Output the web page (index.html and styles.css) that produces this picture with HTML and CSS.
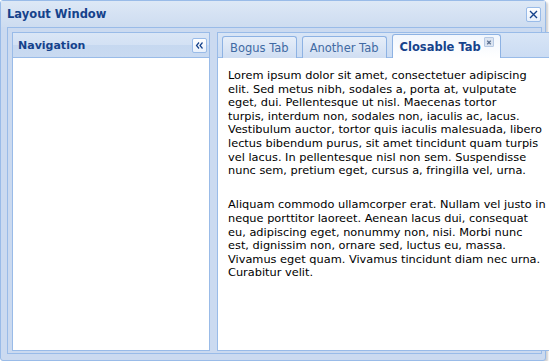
FILE: index.html
```html
<!DOCTYPE html>
<html>
<head>
<meta charset="utf-8">
<link rel="stylesheet" href="styles.css">
</head>
<body>
<div class="win">
  <div class="win-head">
    <span class="win-title">Layout Window</span>
    <span class="tool tool-close">
      <svg width="13" height="13" viewBox="0 0 13 13"><path d="M3 3 L10 10 M10 3 L3 10" stroke="#15428b" stroke-width="1.4" fill="none"/></svg>
    </span>
  </div>
  <div class="win-body">
    <div class="nav">
      <div class="nav-head">
        <span class="nav-title">Navigation</span>
        <span class="tool tool-collapse">
          <svg width="13" height="13" viewBox="0 0 13 13"><path d="M6 3.5 L3.5 6.5 L6 9.5 M9.5 3.5 L7 6.5 L9.5 9.5" stroke="#15428b" stroke-width="1.2" fill="none"/></svg>
        </span>
      </div>
      <div class="nav-body"></div>
    </div>
    <div class="tabs">
      <div class="strip">
        <div class="tab">Bogus Tab</div>
        <div class="tab">Another Tab</div>
        <div class="tab active">Closable Tab<span class="tab-x"><svg width="9" height="9" viewBox="0 0 9 9"><path d="M2.5 2.5 L6.5 6.5 M6.5 2.5 L2.5 6.5" stroke="#5a6f8f" stroke-width="1.3" fill="none"/></svg></span></div>
      </div>
      <div class="tab-body">
        <p>Lorem ipsum dolor sit amet, consectetuer adipiscing<br>elit. Sed metus nibh, sodales a, porta at, vulputate<br>eget, dui. Pellentesque ut nisl. Maecenas tortor<br>turpis, interdum non, sodales non, iaculis ac, lacus.<br>Vestibulum auctor, tortor quis iaculis malesuada, libero<br>lectus bibendum purus, sit amet tincidunt quam turpis<br>vel lacus. In pellentesque nisl non sem. Suspendisse<br>nunc sem, pretium eget, cursus a, fringilla vel, urna.</p>
        <p>Aliquam commodo ullamcorper erat. Nullam vel justo in<br>neque porttitor laoreet. Aenean lacus dui, consequat<br>eu, adipiscing eget, nonummy non, nisi. Morbi nunc<br>est, dignissim non, ornare sed, luctus eu, massa.<br>Vivamus eget quam. Vivamus tincidunt diam nec urna.<br>Curabitur velit.</p>
      </div>
    </div>
  </div>
</div>
</body>
</html>
```
FILE: styles.css
```css
* { box-sizing: border-box; }
html, body { margin: 0; padding: 0; background: #ffffff; }
body { font-family: "DejaVu Sans", Verdana, sans-serif; font-size: 11px; }

.win {
  width: 546px;
  height: 361px;
  border: 1px solid #99bbe8;
  border-radius: 3px;
  background: #cbdaf0;
  display: flex;
  flex-direction: column;
  box-shadow: 2px 2px 2px rgba(0,0,0,0.18);
}
.win-head {
  height: 26px;
  flex: none;
  display: flex;
  align-items: center;
  justify-content: space-between;
  padding: 0 4px 0 6px;
  background: linear-gradient(#dde8f6, #cddcf0);
}
.win-title {
  font-family: "DejaVu Sans", Verdana, sans-serif;
  font-weight: bold;
  font-size: 11.5px;
  color: #15428b;
}
.tool {
  width: 15px;
  height: 15px;
  border: 1px solid #99bbe8;
  border-radius: 2px;
  background: linear-gradient(#ffffff, #e8f0fb);
  display: flex;
  align-items: center;
  justify-content: center;
}
.tool svg { display: block; }

.win-body {
  flex: 1;
  margin: 0 3px 6px 6px;
  border: 1px solid #99bbe8;
  background: #cbdaf0;
  padding: 4px 3px 2px 4px;
  display: flex;
  gap: 7px;
}
.nav {
  width: 198px;
  flex: none;
  border: 1px solid #99bbe8;
  display: flex;
  flex-direction: column;
}
.nav-head {
  height: 25px;
  flex: none;
  border-bottom: 1px solid #99bbe8;
  background: linear-gradient(#dae6f6 0%, #d3e1f4 50%, #c6d8f0 50%, #c9daf1 100%);
  display: flex;
  align-items: center;
  justify-content: space-between;
  padding: 0 2px 0 5px;
}
.nav-title {
  font-weight: bold;
  font-size: 11px;
  color: #15428b;
}
.nav-body { flex: 1; background: #ffffff; }

.tabs {
  flex: 1;
  border: 1px solid #99bbe8;
  display: flex;
  flex-direction: column;
}
.strip {
  height: 25px;
  flex: none;
  background: linear-gradient(#d8e5f6, #cbdcf3);
  border-bottom: 1px solid #99bbe8;
  display: flex;
  align-items: flex-end;
  gap: 5px;
  padding-left: 4px;
}
.tab {
  height: 22px;
  margin-bottom: -1px;
  border: 1px solid #8db2e3;
  border-bottom: none;
  border-radius: 3px 3px 0 0;
  background: linear-gradient(#e6eef9, #d0def2);
  color: #416aa3;
  font-size: 11.5px;
  padding: 0 7px;
  display: flex;
  align-items: center;
  white-space: nowrap;
  position: relative;
}
.tab.active {
  height: 24px;
  background: linear-gradient(#f1f6fd, #ffffff);
  color: #15428b;
  font-weight: bold;
  padding-right: 6px;
}
.tab-x {
  width: 10px;
  height: 10px;
  margin-left: 3px;
  margin-top: -9px;
  border: 1px solid #b6c9e4;
  background: #dbe4f1;
  border-radius: 1px;
  display: flex;
  align-items: center;
  justify-content: center;
}
.tab-body {
  flex: 1;
  background: #ffffff;
  padding: 11px 10px;
  color: #000000;
  font-size: 11.35px;
  line-height: 13.6px;
}
.tab-body p { margin: 0 0 20.6px 0; white-space: nowrap; }
```
